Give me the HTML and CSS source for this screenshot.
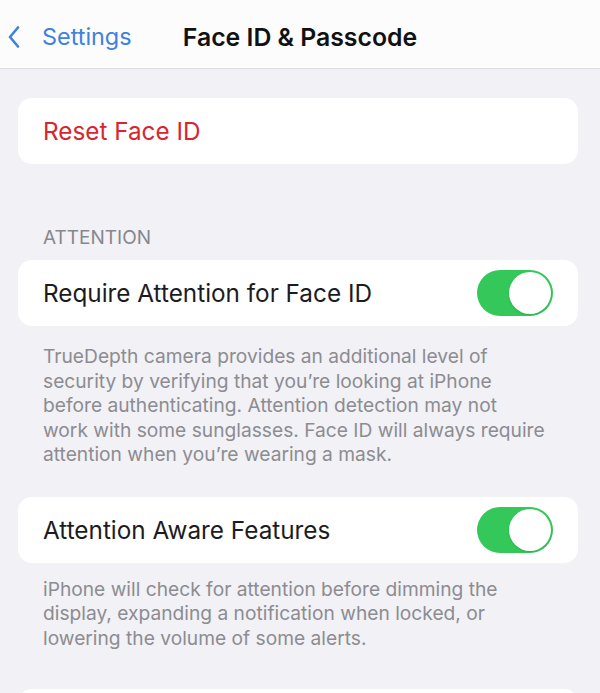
FILE: index.html
```html
<!DOCTYPE html>
<html lang="en">
<head>
  <meta charset="UTF-8">
  <meta name="viewport" content="width=device-width, initial-scale=1.0">
  <title>Face ID &amp; Passcode</title>
  <link rel="stylesheet" href="styles.css">
</head>
<body>
  <header class="navbar">
    <a class="back" href="#">
      <svg class="chevron" viewBox="0 0 12 22" width="12" height="22">
        <path d="M10 1.5 L2 11 L10 20.5" fill="none" stroke="currentColor" stroke-width="2.6" stroke-linecap="round" stroke-linejoin="round"/>
      </svg>
      <span>Settings</span>
    </a>
    <h1 class="title">Face ID &amp; Passcode</h1>
    <div></div>
  </header>

  <main class="content">
    <div class="group group-first">
      <div class="row">
        <span class="row-label danger">Reset Face ID</span>
      </div>
    </div>

    <p class="section-title">ATTENTION</p>
    <div class="group">
      <div class="row">
        <span class="row-label">Require Attention for Face ID</span>
        <span class="toggle on"><span class="knob"></span></span>
      </div>
    </div>
    <p class="footnote">TrueDepth camera provides an additional level of security by verifying that you’re looking at iPhone before authenticating. Attention detection may not work with some sunglasses. Face ID will always require attention when you’re wearing a mask.</p>

    <div class="group">
      <div class="row">
        <span class="row-label">Attention Aware Features</span>
        <span class="toggle on"><span class="knob"></span></span>
      </div>
    </div>
    <p class="footnote footnote-last">iPhone will check for attention before dimming the display, expanding a notification when locked, or lowering the volume of some alerts.</p>

    <div class="group">
      <div class="row"></div>
    </div>
  </main>
</body>
</html>
```

FILE: styles.css
```css
* {
  margin: 0;
  padding: 0;
  box-sizing: border-box;
}

body {
  width: 600px;
  height: 693px;
  overflow: hidden;
  background: #f1f1f6;
  font-family: Inter, "Noto Sans", sans-serif;
  color: #1c1c1e;
}

.navbar {
  height: 69px;
  background: #fcfcfd;
  border-bottom: 1px solid #dcdce0;
  display: grid;
  grid-template-columns: 1fr auto 1fr;
  align-items: center;
  padding-top: 5px;
}

.back {
  display: flex;
  align-items: center;
  gap: 22px;
  padding-left: 8px;
  color: #3d82dc;
  text-decoration: none;
  font-size: 23.4px;
}

.title {
  font-size: 24.8px;
  font-weight: 600;
  color: #111;
}

.content {
  height: 624px;
  overflow: hidden;
  padding: 0 22px 0 18px;
}

.group {
  background: #fff;
  border-radius: 14px;
}

.group-first {
  margin-top: 29px;
}

.row {
  height: 66px;
  padding: 0 25px;
  display: flex;
  align-items: center;
  justify-content: space-between;
}

.row-label {
  font-size: 24.3px;
}

.danger {
  color: #d7262e;
}

.section-title {
  margin: 62px 0 11px 25px;
  font-size: 19px;
  color: #87878c;
}

.footnote {
  margin: 18px 0 30px 25px;
  max-width: 503px;
  font-size: 19.2px;
  line-height: 24.5px;
  color: #8c8c91;
}

.footnote-last {
  margin-top: 14px;
  margin-bottom: 39px;
}

.toggle {
  width: 76px;
  height: 46px;
  border-radius: 23px;
  background: #e5e5ea;
  padding: 2px;
  display: flex;
}

.toggle.on {
  background: #34c759;
  justify-content: flex-end;
}

.knob {
  width: 42px;
  height: 42px;
  border-radius: 50%;
  background: #fff;
  box-shadow: 0 1px 2px rgba(0, 0, 0, 0.12);
}
```
